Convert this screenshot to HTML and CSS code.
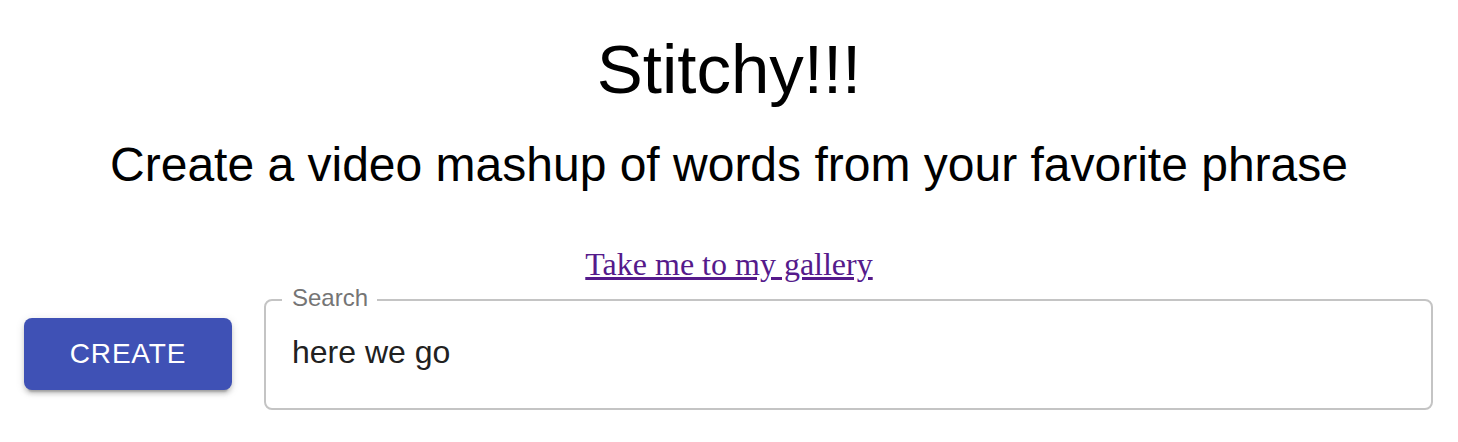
FILE: index.html
```html
<!DOCTYPE html>
<html lang="en">
<head>
<meta charset="utf-8">
<title>Stitchy!!!</title>
<link rel="stylesheet" href="styles.css">
</head>
<body>
<main class="page">
  <h1 class="title">Stitchy!!!</h1>
  <h2 class="subtitle">Create a video mashup of words from your favorite phrase</h2>
  <p class="gallery"><a href="#gallery">Take me to my gallery</a></p>
  <div class="row">
    <button class="create-btn" type="button">Create</button>
    <fieldset class="search-field">
      <legend class="search-label">Search</legend>
      <input class="search-input" type="text" value="here we go">
    </fieldset>
  </div>
</main>
</body>
</html>
```

FILE: styles.css
```css
html, body {
  margin: 0;
  background: #ffffff;
}

body {
  font-family: "Liberation Sans", Arial, Helvetica, sans-serif;
  color: #000000;
}

.page {
  display: flex;
  flex-direction: column;
  padding-top: 30px;
}

.title {
  margin: 0;
  font-size: 69px;
  line-height: 80px;
  font-weight: 400;
  text-align: center;
}

.subtitle {
  margin: 27px 0 0;
  font-size: 48px;
  line-height: 56px;
  font-weight: 400;
  text-align: center;
}

.gallery {
  margin: 51px 0 0;
  text-align: center;
  font-family: "Liberation Serif", "Times New Roman", serif;
  font-size: 32px;
  line-height: 40px;
}

.gallery a {
  color: #551a8b;
  text-decoration: underline;
}

.row {
  display: flex;
  align-items: flex-start;
  gap: 32px;
  margin-top: 2px;
  padding: 0 25px 0 24px;
}

.create-btn {
  flex: none;
  width: 208px;
  height: 72px;
  margin-top: 32px;
  border: none;
  border-radius: 8px;
  background: #3f51b5;
  color: #ffffff;
  font-family: "Liberation Sans", Arial, Helvetica, sans-serif;
  font-size: 28px;
  font-weight: 400;
  letter-spacing: 0.8px;
  text-transform: uppercase;
  box-shadow: 0 6px 2px -4px rgba(0, 0, 0, 0.2),
              0 4px 4px 0 rgba(0, 0, 0, 0.14),
              0 2px 10px 0 rgba(0, 0, 0, 0.12);
  cursor: pointer;
}

.search-field {
  flex: 1;
  min-width: 0;
  margin: 0;
  padding: 0 16px;
  border: 2px solid #c4c4c4;
  border-radius: 8px;
}

.search-label {
  padding: 0 9px 4px 10px;
  font-size: 24px;
  line-height: 24px;
  color: #757575;
}

.search-input {
  display: block;
  width: 100%;
  box-sizing: border-box;
  margin: 0;
  padding: 20px 10px 37px;
  border: none;
  outline: none;
  background: transparent;
  font-family: "Liberation Sans", Arial, Helvetica, sans-serif;
  font-size: 32px;
  line-height: 37px;
  color: #212121;
}
```
